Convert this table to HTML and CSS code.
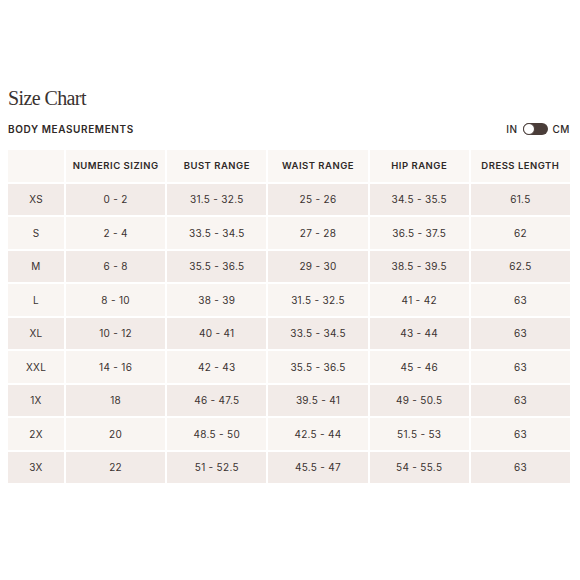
FILE: index.html
```html
<!DOCTYPE html>
<html>
<head>
<meta charset="utf-8">
<link rel="stylesheet" href="styles.css">
</head>
<body>
<div class="page">
  <h1 class="title">Size Chart</h1>
  <div class="bar">
    <span class="subtitle">BODY MEASUREMENTS</span>
    <div class="units">
      <span>IN</span>
      <span class="toggle"><span class="knob"></span></span>
      <span>CM</span>
    </div>
  </div>
  <div class="chart">
    <div class="cell head"></div>
    <div class="cell head">NUMERIC SIZING</div>
    <div class="cell head">BUST RANGE</div>
    <div class="cell head">WAIST RANGE</div>
    <div class="cell head">HIP RANGE</div>
    <div class="cell head">DRESS LENGTH</div>

    <div class="cell dark">XS</div><div class="cell dark">0 - 2</div><div class="cell dark">31.5 - 32.5</div><div class="cell dark">25 - 26</div><div class="cell dark">34.5 - 35.5</div><div class="cell dark">61.5</div>
    <div class="cell light">S</div><div class="cell light">2 - 4</div><div class="cell light">33.5 - 34.5</div><div class="cell light">27 - 28</div><div class="cell light">36.5 - 37.5</div><div class="cell light">62</div>
    <div class="cell dark">M</div><div class="cell dark">6 - 8</div><div class="cell dark">35.5 - 36.5</div><div class="cell dark">29 - 30</div><div class="cell dark">38.5 - 39.5</div><div class="cell dark">62.5</div>
    <div class="cell light">L</div><div class="cell light">8 - 10</div><div class="cell light">38 - 39</div><div class="cell light">31.5 - 32.5</div><div class="cell light">41 - 42</div><div class="cell light">63</div>
    <div class="cell dark">XL</div><div class="cell dark">10 - 12</div><div class="cell dark">40 - 41</div><div class="cell dark">33.5 - 34.5</div><div class="cell dark">43 - 44</div><div class="cell dark">63</div>
    <div class="cell light">XXL</div><div class="cell light">14 - 16</div><div class="cell light">42 - 43</div><div class="cell light">35.5 - 36.5</div><div class="cell light">45 - 46</div><div class="cell light">63</div>
    <div class="cell dark">1X</div><div class="cell dark">18</div><div class="cell dark">46 - 47.5</div><div class="cell dark">39.5 - 41</div><div class="cell dark">49 - 50.5</div><div class="cell dark">63</div>
    <div class="cell light">2X</div><div class="cell light">20</div><div class="cell light">48.5 - 50</div><div class="cell light">42.5 - 44</div><div class="cell light">51.5 - 53</div><div class="cell light">63</div>
    <div class="cell dark">3X</div><div class="cell dark">22</div><div class="cell dark">51 - 52.5</div><div class="cell dark">45.5 - 47</div><div class="cell dark">54 - 55.5</div><div class="cell dark">63</div>
  </div>
</div>
</body>
</html>
```
FILE: styles.css
```css
html, body {
  margin: 0;
  padding: 0;
  background: #ffffff;
}
.page {
  width: 562px;
  padding: 85px 10px 0 8px;
  color: #2f2927;
}
.title {
  margin: 0;
  font-family: "Liberation Serif", serif;
  font-weight: 400;
  font-size: 20px;
  line-height: 26px;
  letter-spacing: -0.6px;
  color: #3a3230;
}
.bar {
  display: flex;
  align-items: center;
  justify-content: space-between;
  height: 18px;
  margin-top: 9px;
  margin-bottom: 12px;
}
.subtitle {
  font-family: "Inter", "Liberation Sans", sans-serif;
  font-weight: 600;
  font-size: 10px;
  letter-spacing: 0.6px;
  color: #2f2927;
}
.units {
  display: flex;
  align-items: center;
  gap: 5px;
  font-family: "Inter", "Liberation Sans", sans-serif;
  font-weight: 500;
  font-size: 10px;
  letter-spacing: 0.5px;
  color: #2f2927;
}
.toggle {
  position: relative;
  display: inline-block;
  width: 25px;
  height: 12px;
  border-radius: 6px;
  background: #4a3d39;
}
.knob {
  position: absolute;
  left: 0;
  top: 0;
  width: 10px;
  height: 10px;
  border-radius: 50%;
  background: #ffffff;
  border: 1px solid #4a3d39;
}
.chart {
  display: grid;
  grid-template-columns: 56px repeat(5, 1fr);
  grid-auto-rows: 31.5px;
  gap: 2px;
}
.cell {
  display: flex;
  align-items: center;
  justify-content: center;
  font-family: "Inter", "Liberation Sans", sans-serif;
  font-size: 10px;
  letter-spacing: 0.3px;
  color: #3a3230;
}
.head {
  background: #faf7f4;
  font-weight: 600;
  font-size: 9.5px;
  letter-spacing: 0.5px;
  color: #2f2927;
}
.dark {
  background: #f2ebe8;
}
.light {
  background: #f9f5f2;
}
```
